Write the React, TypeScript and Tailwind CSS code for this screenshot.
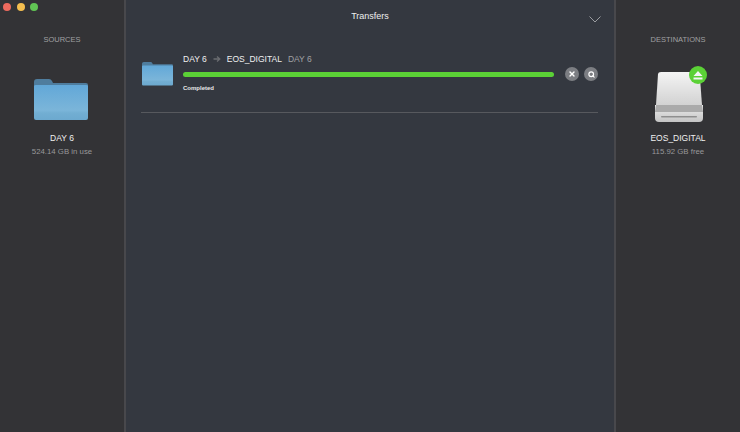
import { Search, X } from "lucide-react";

function Folder({ className }: { className: string }) {
  return (
    <svg viewBox="0 0 54 42" className={className}>
      <defs>
        <linearGradient id="folderFront" x1="0" y1="0" x2="0" y2="1">
          <stop offset="0" stopColor="#62a8d8" />
          <stop offset="0.72" stopColor="#7bb5d9" />
          <stop offset="0.8" stopColor="#72aed2" />
          <stop offset="1" stopColor="#6ca9cf" />
        </linearGradient>
      </defs>
      <path d="M0 4 Q0 1 3 1 H15 Q17 1 18 3 L19 5 H52 Q54 5 54 7 V12 H0 Z" fill="#4f7d9e" />
      <path d="M0 8 Q0 7 2 7 H52 Q54 7 54 8 V40 Q54 42 52 42 H2 Q0 42 0 40 Z" fill="url(#folderFront)" />
    </svg>
  );
}

function Drive() {
  return (
    <svg viewBox="0 0 50 52" className="h-[52px] w-[50px]">
      <defs>
        <linearGradient id="driveTop" x1="0" y1="0" x2="0" y2="1">
          <stop offset="0" stopColor="#f4f4f4" />
          <stop offset="1" stopColor="#d2d2d2" />
        </linearGradient>
        <linearGradient id="driveBase" x1="0" y1="0" x2="0" y2="1">
          <stop offset="0" stopColor="#ececec" />
          <stop offset="1" stopColor="#c4c4c4" />
        </linearGradient>
      </defs>
      <path d="M4 3 Q4.200 1 7 1 H43 Q45.500 1 45.700 3 L48 34 H2 Z" fill="url(#driveTop)" />
      <path d="M1 34 H49 V47 Q49 51 45 51 H5 Q1 51 1 47 Z" fill="url(#driveBase)" />
      <path d="M2 34 H48 L49 41 H1 Z" fill="#aaaaaa" />
      <rect x="7" y="45" width="36" height="1.500" rx="0.750" fill="#8f8f8f" />
    </svg>
  );
}

function Side({
  title,
  name,
  info,
  children,
}: {
  title: string;
  name: string;
  info: string;
  children: React.ReactNode;
}) {
  return (
    <div className="flex h-[432px] w-[124px] shrink-0 flex-col items-center bg-[#333336]">
      <div className="mt-[35px] h-[10px] text-[7.5px] leading-[10px] text-[#a0a0a2]">{title}</div>
      <div className="mt-[26px] flex h-[52px] items-end justify-center">{children}</div>
      <div className="mt-[9px] h-[12px] text-[8.500px] leading-[12px] text-[#f0f0f0]">{name}</div>
      <div className="mt-[3px] h-[10px] text-[7.800px] leading-[10px] text-[#98989a]">{info}</div>
    </div>
  );
}

export default function App() {
  return (
    <div className="relative flex h-[432px] w-[740px] overflow-hidden bg-[#343840] font-['Liberation_Sans',sans-serif]">
      {/* window buttons */}
      <div className="absolute top-[3px] left-[3px] flex gap-[5.500px]">
        <div className="h-[8px] w-[8px] rounded-full bg-[#ed6a5e]" />
        <div className="h-[8px] w-[8px] rounded-full bg-[#f5bf4f]" />
        <div className="h-[8px] w-[8px] rounded-full bg-[#61c554]" />
      </div>

      <Side title="SOURCES" name="DAY 6" info="524.14 GB in use">
        <div className="pr-[2px] pb-[3px]">
          <Folder className="h-[42px] w-[54px]" />
        </div>
      </Side>

      <div className="w-[2px] shrink-0 bg-[#48484c]" />

      <div className="flex min-w-0 flex-1 flex-col pr-[16px] pl-[15px]">
        <div className="flex h-[39px] items-start">
          <div className="w-[10px]" />
          <div className="mt-[10px] flex-1 text-center text-[9px] leading-[12px] text-[#eeeeee]">Transfers</div>
          <svg viewBox="0 0 12 7" className="mt-[16px] mr-[-3px] h-[7px] w-[12px]">
            <path d="M0.500 0.500 L6 6 L11.500 0.500" fill="none" stroke="#9b9da1" strokeWidth="1" />
          </svg>
        </div>

        <div className="flex h-[74px] border-b border-[#57595e]">
          <Folder className="mt-[22px] ml-[1px] h-[25px] w-[31px]" />
          <div className="ml-[10px] min-w-0 flex-1">
            <div className="mt-[14px] flex h-[12px] items-center text-[8.500px] leading-[12px]">
              <span className="text-[#f0f0f0]">DAY 6</span>
              <svg viewBox="0 0 8 8" className="mx-[6px] h-[8px] w-[8px]">
                <path d="M0.500 4 H6.500 M4 1.500 L6.800 4 L4 6.500" fill="none" stroke="#6a6c70" strokeWidth="1.300" />
              </svg>
              <span className="text-[#f0f0f0]">EOS_DIGITAL</span>
              <span className="ml-[6px] text-[#a0a1a4]">DAY 6</span>
            </div>
            <div className="mt-[2px] flex h-[14px] items-center">
              <div className="h-[5px] w-[371px] rounded-full bg-[#5bd136]" />
              <div className="ml-[11px] flex h-[14px] w-[14px] items-center justify-center rounded-full bg-[#7c7e83]">
                <X className="h-[8px] w-[8px] text-white" strokeWidth={4} />
              </div>
              <div className="ml-[5px] flex h-[14px] w-[14px] items-center justify-center rounded-full bg-[#7c7e83]">
                <Search className="h-[7px] w-[7px] text-white" strokeWidth={4} />
              </div>
            </div>
            <div className="mt-[3px] text-[6px] leading-[8px] font-bold text-[#e8e8e8]">Completed</div>
          </div>
        </div>
      </div>

      <div className="w-[2px] shrink-0 bg-[#48484c]" />

      <Side title="DESTINATIONS" name="EOS_DIGITAL" info="115.92 GB free">
        <div className="relative pl-[2px]">
          <Drive />
          <div className="absolute top-[-5px] right-[-3px] flex h-[18px] w-[18px] items-center justify-center rounded-full bg-[#5bd136]">
            <svg viewBox="0 0 10 9" className="h-[9px] w-[10px]">
              <path d="M5 0 L9.500 5 H0.500 Z M0.500 6.500 H9.500 V8.500 H0.500 Z" fill="#f4f4f4" />
            </svg>
          </div>
        </div>
      </Side>
    </div>
  );
}
